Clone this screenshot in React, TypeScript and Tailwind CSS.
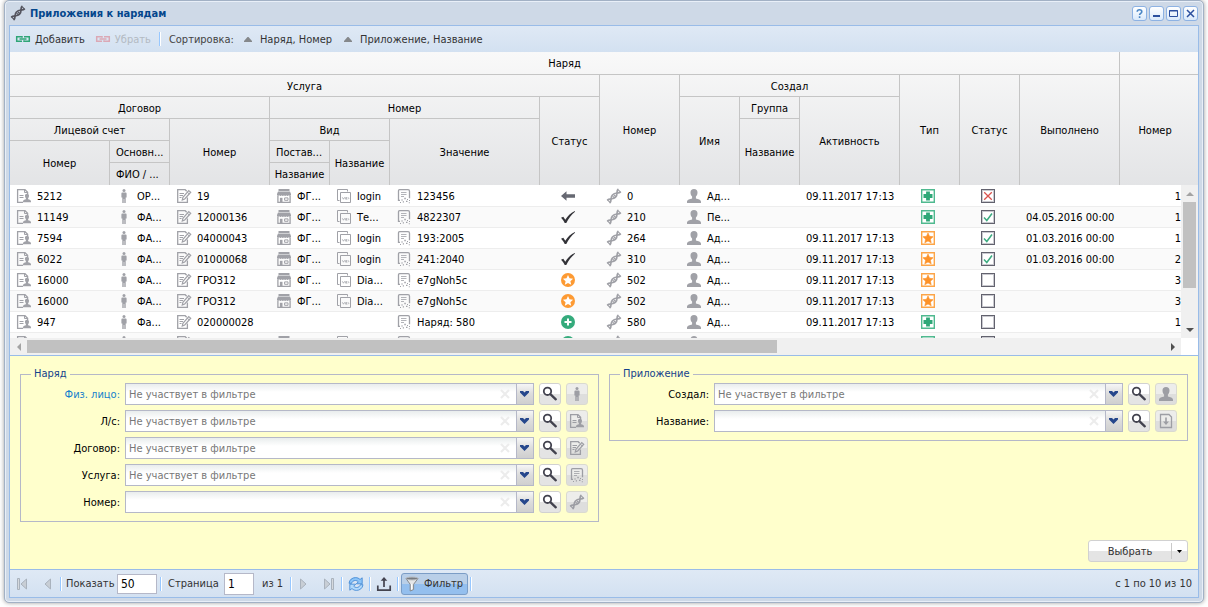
import { useState } from 'react'
import type { ReactNode } from 'react'
import clsx from 'clsx'

type IconProps = { className?: string }

function Icon({ children, className }: { children: ReactNode; className?: string }) {
  return (
    <svg viewBox="0 0 16 16" aria-hidden="true" className={clsx('inline-block size-4 shrink-0', className)}>
      {children}
    </svg>
  )
}

const DnaIcon = ({ className }: IconProps) => (
  <Icon className={className}>
    <g fill="none" stroke="currentColor" strokeWidth="1.7" strokeLinecap="round">
      <path d="M1.600 11.800c1.300-1 2.300-.5 3.400-.8C5 7.800 7 5.500 11 5c.3-1.300-.2-2.300.8-3.500" />
      <path d="M4.200 14.500c1-1.200.5-2.200.8-3.500C9 10.500 11 8.200 11 5c1.100-.3 2.100.2 3.400-.8" />
      <path d="M6.900 8.400l1.400 1.200M8 7l1.400 1.200M12.500 2.200l1.500 1.500M2 12.300l1.700 1.700" strokeWidth="1.200" />
    </g>
  </Icon>
)

const AccountIcon = ({ className }: IconProps) => (
  <Icon className={className}>
    <path d="M7 14.300H1.600V1.700h7.400l2.600 2.600V6" fill="none" stroke="currentColor" strokeWidth="1.300" />
    <path d="M8.500 1.700v2.800h2.800" fill="none" stroke="currentColor" />
    <path d="M3.500 7.500h4M3.500 9.500h4" stroke="currentColor" />
    <path d="M11 5.800c1.300 0 2 .8 2 2.100 0 1-.4 1.800-.9 2.300v1.100c1.400.4 2.900.8 2.900 2.100v.8H7v-.8c0-1.300 1.500-1.700 2.900-2.100v-1.100c-.5-.5-.9-1.300-.9-2.300 0-1.300.7-2.100 2-2.100z" fill="currentColor" />
  </Icon>
)

const PersonIcon = ({ className }: IconProps) => (
  <Icon className={className}>
    <circle cx="8" cy="2.500" r="1.500" fill="currentColor" />
    <path d="M6.500 4.500h3c.7 0 1.100.4 1.100 1.100v4h-.9V15H8.300v-4h-.6v4H6.300V9.600h-.9v-4c0-.7.4-1.100 1.100-1.100z" fill="currentColor" />
  </Icon>
)

const ContractIcon = ({ className }: IconProps) => (
  <Icon className={className}>
    <path d="M11.400 9.500v4.800H1.700V1.700h7.500l1.500 1.500" fill="none" stroke="currentColor" strokeWidth="1.300" />
    <path d="M3.500 5.500h4.500M3.500 7.500h3.500M3.500 9.500h2" stroke="currentColor" />
    <path d="M12.800 2.600l1.900 1.600-6 6.800-2.400 1 .6-2.600z" fill="none" stroke="currentColor" strokeWidth="1.200" />
    <path d="M11.300 4.200l2 1.800" stroke="currentColor" />
  </Icon>
)

const ShopIcon = ({ className }: IconProps) => (
  <Icon className={className}>
    <path d="M2.500 1h11v2h-11zM2 3.600h12L15 6v1c0 1-1.800 1.200-2.400.2-.6 1-1.700 1-2.300 0-.6 1-1.700 1-2.300 0-.6 1-1.700 1-2.300 0-.6 1-1.700 1-2.300 0C2.800 8.200 1 8 1 7V6z" fill="currentColor" />
    <path d="M1.900 8v6.400h12.200V8" fill="none" stroke="currentColor" strokeWidth="1.300" />
    <path d="M3.900 9.800h2.600V14H3.900z" fill="currentColor" />
    <path d="M8.600 9.900h3.400v2.400H8.600z" fill="none" stroke="currentColor" />
  </Icon>
)

const WindowsIcon = ({ className }: IconProps) => (
  <Icon className={className}>
    <path d="M3.500 12.500h-2v-11h10v2" fill="none" stroke="currentColor" />
    <path d="M4.500 4.500h10v10h-10z" fill="none" stroke="currentColor" />
    <path d="M6.300 9.300l1.200 1.900 1.100-1.900M9.700 11.200V9.500h1v1.700zM12 9.300l.8 1-.8 1" fill="none" stroke="currentColor" strokeWidth=".8" />
  </Icon>
)

const ServiceIcon = ({ className }: IconProps) => (
  <Icon className={className}>
    <path d="M4 12.300H2.500V2.700c0-.6.400-1 1-1H12c1 0 1.500.6 1.500 1.500v7" fill="none" stroke="currentColor" strokeWidth="1.300" />
    <path d="M5 4.500h5.500M5 6.500h5.500M5 8.500h3" fill="none" stroke="currentColor" strokeWidth=".8" />
    <path d="M8.300 9.800h1.500v1.500H8.300zM5.300 11.500h1.500v1H5.300zM11 11h1v1h-1zM6.800 13.300H8v1.200H6.800zM10 12.700h1.500v1.200H10zM13 12h1v1h-1zM4 14h1v1H4zM12.800 14.300h1v1h-1z" fill="currentColor" />
  </Icon>
)

const UserIcon = ({ className }: IconProps) => (
  <Icon className={className}>
    <path d="M8 1c2.300 0 3.500 1.400 3.500 3.500 0 1.800-.7 3.200-1.600 4.100v1.800c2.300.5 5.100 1.200 5.100 3.300V15H1v-1.300c0-2.100 2.800-2.800 5.100-3.300V8.600c-.9-.9-1.600-2.300-1.600-4.100C4.500 2.400 5.700 1 8 1z" fill="currentColor" />
  </Icon>
)

const DownloadIcon = ({ className }: IconProps) => (
  <Icon className={className}>
    <path d="M2.500 1.500H11L13.500 4v10.500h-11z" fill="none" stroke="currentColor" strokeWidth="1.300" />
    <path d="M7.200 4.500h1.600v4h2.200l-3 3.500-3-3.500h2.200z" fill="currentColor" />
  </Icon>
)

const LinkIcon = ({ className }: IconProps) => (
  <Icon className={className}>
    <path d="M7 10.300H1.700V5.700H7v1.100M9 5.700h5.300v4.600H9V9.200M4.500 8h7" fill="none" stroke="currentColor" strokeWidth="1.500" />
  </Icon>
)

const SearchIcon = ({ className }: IconProps) => (
  <Icon className={className}>
    <circle cx="5.500" cy="5.300" r="3.700" fill="none" stroke="currentColor" strokeWidth="1.800" />
    <path d="M8.600 8.300l5.200 5" stroke="currentColor" strokeWidth="2.300" strokeLinecap="round" />
  </Icon>
)

const RefreshIcon = () => (
  <Icon>
    <path d="M1 7.300C1.400 3.700 4.300 1.600 7.500 1.600c2 0 3.400.7 4.500 1.900l2.200-1.700v6H8.300l2-2C9.600 5 8.700 4.500 7.500 4.500 5.600 4.500 4 5.500 3.700 7.300z" fill="#8cc4f7" stroke="#3a83d2" strokeWidth=".8" />
    <path d="M15 8.700c-.4 3.600-3.300 5.700-6.500 5.700-2 0-3.400-.7-4.500-1.900l-2.200 1.700v-6h5.900l-2 2c.7.800 1.600 1.300 2.800 1.300 1.900 0 3.500-1 3.800-2.800z" fill="#b2dafc" stroke="#3a83d2" strokeWidth=".8" />
  </Icon>
)

const ExportIcon = () => (
  <Icon className="text-[#43434f]">
    <path d="M1.800 9.500v4.600h12.400V9.500M8 11V3.500" fill="none" stroke="currentColor" strokeWidth="1.700" />
    <path d="M8 1l3.300 3.800H4.700z" fill="currentColor" />
  </Icon>
)

const FunnelIcon = () => (
  <Icon>
    <path d="M2 2.500L6.200 8.300V15l3.400-1.500V8.300L14 2.500z" fill="#e4e6e8" stroke="#85898d" />
    <ellipse cx="8" cy="2.500" rx="6" ry="1.400" fill="#777b80" stroke="#b4b8bc" />
    <path d="M7.600 8v5.500" stroke="#fff" />
  </Icon>
)

function PageArrow({ label, flip, bar }: { label: string; flip?: boolean; bar?: boolean }) {
  return (
    <button disabled aria-label={label} className="flex h-[22px] w-6 items-center justify-center rounded-sm text-[#a9b2bd]">
      <Icon className={clsx(flip && '-scale-x-100')}>
        {bar && <path d="M2.500 2.500h2v11h-2z" fill="#d5d9de" stroke="currentColor" />}
        <path d="M11.500 3v10L6 8z" fill="#c8ced5" stroke="currentColor" />
      </Icon>
    </button>
  )
}

const star = 'M8 3l1.500 3.300 3.600.4-2.700 2.500.8 3.600L8 11l-3.200 1.800.8-3.600-2.700-2.500 3.600-.4z'

function StatusIcon({ kind }: { kind: string }) {
  if (kind === 'back')
    return (
      <Icon>
        <path d="M1 8l5.500-4.700v3H15v3.400H6.500v3z" fill="#666872" />
      </Icon>
    )
  if (kind === 'done')
    return (
      <Icon>
        <path d="M1 8.800l2.300-1 2 3C7.500 7.200 10.500 3.800 14.800 2l.2.800C11.500 5.500 8.500 9.400 6.300 14H4.700C3.800 12 2.700 10.300 1 8.800z" fill="#333338" />
      </Icon>
    )
  if (kind === 'star')
    return (
      <Icon>
        <circle cx="8" cy="8" r="7" fill="#fd9a33" />
        <path d={star} fill="#fff" />
      </Icon>
    )
  return (
    <Icon>
      <circle cx="8" cy="8" r="7" fill="#35ab7c" />
      <path d="M8 4.500v7M4.500 8h7" stroke="#fff" strokeWidth="2" />
    </Icon>
  )
}

function TypeIcon({ kind }: { kind: string }) {
  if (kind === 'star')
    return (
      <Icon>
        <path d="M1.700 1.700h12.600v12.600H1.700z" fill="#fff" stroke="#fca548" strokeWidth="1.400" />
        <path d={star} fill="#fd9228" stroke="#fd9228" strokeWidth=".6" />
      </Icon>
    )
  return (
    <Icon>
      <path d="M1.700 1.700h12.600v12.600H1.700z" fill="#fff" stroke="#4fb98f" strokeWidth="1.400" />
      <path d="M8 3.500v9M3.500 8h9" stroke="#2fa878" strokeWidth="3.800" />
    </Icon>
  )
}

function Tick({ state }: { state: string }) {
  return (
    <span className="inline-grid size-4 align-middle">
      <input
        type="checkbox"
        readOnly
        checked={state === 'yes'}
        aria-label="Статус"
        className="col-start-1 row-start-1 m-px appearance-none border border-[#62626e] bg-white inset-ring inset-ring-[#c9c9cf]"
      />
      <svg viewBox="0 0 16 16" aria-hidden="true" className="pointer-events-none col-start-1 row-start-1" fill="none">
        {state === 'yes' && <path d="M4 8.500L6.800 11.500 12 4.500" stroke="#3cab80" strokeWidth="1.500" />}
        {state === 'no' && <path d="M4.200 4.200l7.600 7.600M11.800 4.200l-7.600 7.600" stroke="#d9534f" strokeWidth="1.300" />}
      </svg>
    </span>
  )
}

const date = '09.11.2017 17:13'

// account, person, contract, provider, service kind, value, status, order, author, created, type, check, finished, last
// null leaves the cell empty, '' keeps the icon alone
const rows = [
  ['5212', 'ОР...', '19', 'ФГ...', 'login', '123456', 'back', '0', 'Ад...', date, 'plus', 'no', '', '1'],
  ['11149', 'ФА...', '12000136', 'ФГ...', 'Те...', '4822307', 'done', '210', 'Пе...', '', 'plus', 'yes', '04.05.2016 00:00', '1'],
  ['7594', 'ФА...', '04000043', 'ФГ...', 'login', '193:2005', 'done', '264', 'Ад...', date, 'star', 'yes', '01.03.2016 00:00', '1'],
  ['6022', 'ФА...', '01000068', 'ФГ...', 'login', '241:2040', 'done', '310', 'Ад...', date, 'star', 'yes', '01.03.2016 00:00', '2'],
  ['16000', 'ФА...', 'ГРО312', 'ФГ...', 'Dia...', 'e7gNoh5c', 'star', '502', 'Ад...', date, 'star', '', '', '3'],
  ['16000', 'ФА...', 'ГРО312', 'ФГ...', 'Dia...', 'e7gNoh5c', 'star', '502', 'Ад...', date, 'star', '', '', '3'],
  ['947', 'Фа...', '020000028', null, null, 'Наряд: 580', 'plus', '580', 'Ад...', date, 'plus', '', '', '1'],
  ['', '', '', '', '', '', 'plus', '', '', '', 'plus', '', '', ''],
]

function Columns() {
  return (
    <colgroup>
      <col className="w-[100px]" />
      <col className="w-[60px]" />
      <col className="w-[100px]" />
      <col className="w-[60px]" />
      <col className="w-[60px]" />
      <col className="w-[150px]" />
      <col className="w-[60px]" />
      <col className="w-20" />
      <col className="w-[60px]" />
      <col className="w-[60px]" />
      <col className="w-[100px]" />
      <col className="w-[60px]" />
      <col className="w-[60px]" />
      <col className="w-[100px]" />
      <col />
    </colgroup>
  )
}

type HeadProps = { children?: ReactNode; cols?: number; span?: number; left?: boolean; last?: boolean; bottom?: boolean }

function Head({ children, cols, span, left, last, bottom }: HeadProps) {
  return (
    <th
      colSpan={cols}
      rowSpan={span}
      className={clsx(
        'overflow-hidden border-[#c5c5c5] pt-px pb-0 font-normal whitespace-nowrap',
        left ? 'pl-1.5 text-left' : 'px-0 text-center',
        last ? 'pr-2' : 'border-r',
        !bottom && 'border-b',
      )}
    >
      {children}
    </th>
  )
}

function GridHeader() {
  return (
    <div className="bg-linear-to-b from-[#f9f9f9] to-[#e3e4e6]">
      <table className="w-full table-fixed border-separate border-spacing-0">
        <Columns />
        <thead>
          <tr className="h-[23px]">
            <Head cols={14}>Наряд</Head>
            <Head last />
          </tr>
          <tr className="h-[22px]">
            <Head cols={7}>Услуга</Head>
            <Head span={5} bottom>Номер</Head>
            <Head cols={3}>Создал</Head>
            <Head span={5} bottom>Тип</Head>
            <Head span={5} bottom>Статус</Head>
            <Head span={5} bottom>Выполнено</Head>
            <Head span={5} bottom last>Номер</Head>
          </tr>
          <tr className="h-[22px]">
            <Head cols={3}>Договор</Head>
            <Head cols={3}>Номер</Head>
            <Head span={4} bottom>Статус</Head>
            <Head span={4} bottom>Имя</Head>
            <Head>Группа</Head>
            <Head span={4} bottom>Активность</Head>
          </tr>
          <tr className="h-[22px]">
            <Head cols={2}>Лицевой счет</Head>
            <Head span={3} bottom>Номер</Head>
            <Head cols={2}>Вид</Head>
            <Head span={3} bottom>Значение</Head>
            <Head span={3} bottom>Название</Head>
          </tr>
          <tr className="h-[22px]">
            <Head span={2} bottom>Номер</Head>
            <Head left>Основн...</Head>
            <Head left>Постав...</Head>
            <Head span={2} bottom>Название</Head>
          </tr>
          <tr className="h-[22px]">
            <Head left bottom>ФИО / ...</Head>
            <Head bottom>Название</Head>
          </tr>
        </thead>
      </table>
    </div>
  )
}

function Cell({ icon, children }: { icon?: ReactNode; children?: string | null }) {
  return (
    <td className="overflow-hidden border-b border-[#ededed] pl-1.5 whitespace-nowrap">
      {children != null && (
        <span className="flex items-center gap-[5px]">
          {icon}
          {children && <span>{children}</span>}
        </span>
      )}
    </td>
  )
}

function MarkCell({ children }: { children: ReactNode }) {
  return (
    <td className="border-b border-[#ededed] pr-1">
      <span className="flex justify-center">{children}</span>
    </td>
  )
}

function GridBody() {
  const gray = 'text-[#a0a1a7]'
  return (
    <div className="flex h-[153px]">
      <div className="min-w-0 flex-1 overflow-hidden bg-white pt-px">
        <table className="w-full table-fixed border-separate border-spacing-0 text-black">
          <Columns />
          <tbody>
            {rows.map((r, i) => (
              <tr key={i} className="h-[21px] even:bg-[#fafafa]">
                <Cell icon={<AccountIcon className={gray} />}>{r[0]}</Cell>
                <Cell icon={<PersonIcon className={gray} />}>{r[1]}</Cell>
                <Cell icon={<ContractIcon className={gray} />}>{r[2]}</Cell>
                <Cell icon={<ShopIcon className={gray} />}>{r[3]}</Cell>
                <Cell icon={<WindowsIcon className={gray} />}>{r[4]}</Cell>
                <Cell icon={<ServiceIcon className={gray} />}>{r[5]}</Cell>
                <MarkCell><StatusIcon kind={r[6] ?? ''} /></MarkCell>
                <Cell icon={<DnaIcon className={gray} />}>{r[7]}</Cell>
                <Cell icon={<UserIcon className={gray} />}>{r[8]}</Cell>
                <Cell />
                <Cell>{r[9]}</Cell>
                <MarkCell><TypeIcon kind={r[10] ?? ''} /></MarkCell>
                <MarkCell><Tick state={r[11] ?? ''} /></MarkCell>
                <Cell>{r[12]}</Cell>
                <td className="border-b border-[#ededed] text-right">{r[13]}</td>
              </tr>
            ))}
          </tbody>
        </table>
      </div>
      <div className="flex w-[17px] flex-col items-center bg-[#f0f0f0]">
        <button aria-label="Вверх" className="flex h-[17px] w-full items-center justify-center text-[#a3a3a3]">
          <svg viewBox="0 0 8 4" className="h-1 w-2"><path d="M0 4l4-4 4 4z" fill="currentColor" /></svg>
        </button>
        <div className="h-[86px] w-[13px] bg-[#c1c1c1]" />
        <button aria-label="Вниз" className="mt-auto flex h-[17px] w-full items-center justify-center text-[#505050]">
          <svg viewBox="0 0 8 4" className="h-1 w-2"><path d="M0 0l4 4 4-4z" fill="currentColor" /></svg>
        </button>
      </div>
    </div>
  )
}

function HorizontalScroll() {
  return (
    <div className="flex h-[17px] bg-white">
      <div className="flex flex-1 items-center bg-[#f0f0f0]">
        <button aria-label="Влево" className="flex h-full w-[17px] items-center justify-center text-[#a3a3a3]">
          <svg viewBox="0 0 4 8" className="h-2 w-1"><path d="M4 0L0 4l4 4z" fill="currentColor" /></svg>
        </button>
        <div className="flex-1">
          <div className="h-[13px] w-[66%] bg-[#c1c1c1]" />
        </div>
        <button aria-label="Вправо" className="flex h-full w-[17px] items-center justify-center text-[#505050]">
          <svg viewBox="0 0 4 8" className="h-2 w-1"><path d="M0 0l4 4-4 4z" fill="currentColor" /></svg>
        </button>
      </div>
      <div className="w-[17px]" />
    </div>
  )
}

type FieldProps = { id: string; label: string; icon: ReactNode; hint?: string; active?: boolean }

function FilterField({ id, label, icon, hint, active }: FieldProps) {
  const [value, setValue] = useState('')
  return (
    <div className="flex h-[22px] items-center">
      <label htmlFor={id} className={clsx('w-[94px] pr-[5px] text-right', active ? 'text-[#157fcc]' : 'text-black')}>
        {label}:
      </label>
      <div className="mr-[5px] flex h-full min-w-0 flex-1 border border-[#b5b8c8] bg-white bg-linear-to-b from-[#e9eded] to-white to-40%">
        <input
          id={id}
          value={value}
          placeholder={hint}
          onChange={(e) => setValue(e.target.value)}
          className="min-w-0 flex-1 px-[3px] pt-px text-black outline-none placeholder:text-[#777]"
        />
        <button aria-label="Очистить" onClick={() => setValue('')} className="flex w-[22px] items-center justify-center text-[#ececec]">
          <svg viewBox="0 0 10 10" className="size-2.5"><path d="M1 1l8 8M9 1L1 9" stroke="currentColor" strokeWidth="2.200" /></svg>
        </button>
        <button aria-label="Открыть список" className="flex w-[17px] border-l border-[#b5b8c8] bg-linear-to-b from-[#f6f6f6] via-[#dcdcdc] to-[#cfcfcf] pt-[7px] pl-[3px]">
          <svg viewBox="0 0 9 6" className="h-1.5 w-[9px]"><path d="M0 0h3l1.500 1.500L6 0h3v1.500L4.500 6 0 1.500z" fill="#26478c" /></svg>
        </button>
      </div>
      <button
        aria-label="Найти"
        className="mr-[5px] flex size-[22px] items-center justify-center rounded-[3px] border border-[#d1d1d1] bg-linear-to-b from-white from-50% to-[#e4e4e4] to-50% text-[#43434f]"
      >
        <SearchIcon />
      </button>
      <button
        disabled
        aria-label="Карточка"
        className="flex size-[22px] items-center justify-center rounded-[3px] border border-[#dadad0] bg-linear-to-b from-[#ededeb] from-50% to-[#dededd] to-50% text-[#9d9ea4]"
      >
        {icon}
      </button>
    </div>
  )
}

function FilterGroup({ title, children }: { title: string; children: ReactNode }) {
  return (
    <fieldset className="flex-1 border border-[#b5b8c8] px-2.5 pb-2">
      <legend className="px-[3px] leading-[14px] text-[#15428b]">{title}</legend>
      <div className="flex flex-col gap-[5px] pt-0.5">{children}</div>
    </fieldset>
  )
}

const hint = 'Не участвует в фильтре'

function FilterPanel() {
  return (
    <form className="flex flex-1 flex-col border-t border-[#99bce8] bg-[#ffffcc] px-2.5 pt-[11px] pb-[7px]" onSubmit={(e) => e.preventDefault()}>
      <div className="flex items-start gap-2.5">
        <FilterGroup title="Наряд">
          <FilterField id="person" label="Физ. лицо" hint={hint} icon={<PersonIcon />} active />
          <FilterField id="account" label="Л/с" hint={hint} icon={<AccountIcon />} />
          <FilterField id="contract" label="Договор" hint={hint} icon={<ContractIcon />} />
          <FilterField id="service" label="Услуга" hint={hint} icon={<ServiceIcon />} />
          <FilterField id="order" label="Номер" icon={<DnaIcon />} />
        </FilterGroup>
        <FilterGroup title="Приложение">
          <FilterField id="author" label="Создал" hint={hint} icon={<UserIcon />} />
          <FilterField id="name" label="Название" icon={<DownloadIcon />} />
        </FilterGroup>
      </div>
      <div className="mt-auto flex justify-end">
        <div className="flex h-[22px] w-[100px] items-center rounded-[3px] border border-[#d1d1d1] bg-linear-to-b from-white from-50% to-[#e4e4e4] to-50% text-[#333]">
          <button className="h-full flex-1">Выбрать</button>
          <button aria-label="Ещё" className="flex h-4 w-4 items-center justify-center border-l border-[#c9c9c9]">
            <svg viewBox="0 0 5 3" className="h-[3px] w-[5px]"><path d="M0 0h5L2.500 3z" fill="#000" /></svg>
          </button>
        </div>
      </div>
    </form>
  )
}

const Separator = ({ className }: IconProps) => <span className={clsx('h-3.5 w-0.5 border-r border-l border-r-white border-l-[#98c8ff]', className)} />

function PagingBar() {
  return (
    <footer className="flex h-7 items-center border-t border-[#99bce8] bg-linear-to-b from-[#dfe9f5] to-[#d3e1f1] pr-1.5 pl-px text-[#333]">
      <PageArrow label="Первая страница" bar />
      <PageArrow label="Предыдущая страница" />
      <Separator className="ml-px" />
      <label htmlFor="limit" className="w-[55px] pl-1">Показать</label>
      <input id="limit" defaultValue="50" className="h-5 w-10 border border-[#b5b8c8] bg-white px-[3px] text-xs text-black" />
      <Separator className="ml-[3px]" />
      <label htmlFor="page" className="w-[62px] pl-1.5">Страница</label>
      <input id="page" defaultValue="1" className="h-[22px] w-[30px] border border-[#b5b8c8] bg-white px-[3px] text-xs text-black" />
      <span className="w-9 pl-2">из 1</span>
      <Separator />
      <PageArrow label="Следующая страница" flip />
      <PageArrow label="Последняя страница" flip bar />
      <Separator className="ml-px" />
      <button aria-label="Обновить" className="flex w-[26px] justify-center"><RefreshIcon /></button>
      <Separator />
      <button aria-label="Выгрузить" className="flex w-[26px] justify-center"><ExportIcon /></button>
      <Separator />
      <button className="ml-0.5 flex h-[22px] items-center gap-1 rounded-[3px] border border-[#7b9dc6] bg-linear-to-b from-[#b9cfe8] from-50% to-[#94bfee] to-50% pr-1 pl-0.5">
        <FunnelIcon />
        <span>Фильтр</span>
      </button>
      <Separator className="ml-0.5" />
      <span className="ml-auto">с 1 по 10 из 10</span>
    </footer>
  )
}

function WindowTool({ label, children }: { label: string; children: ReactNode }) {
  return (
    <button aria-label={label} className="flex size-[15px] items-center justify-center rounded-[3px] border border-[#8db2e3] bg-linear-to-b from-white to-[#d9e9fb]">
      <svg viewBox="0 0 11 11" aria-hidden="true" className="size-[11px]" fill="none" stroke="#2b4f9e">{children}</svg>
    </button>
  )
}

function TitleBar() {
  return (
    <header className="flex h-6 items-center pr-px pl-px">
      <DnaIcon className="text-[#55555f]" />
      <h1 className="ml-1 flex-1 font-bold text-[#04468c]">Приложения к нарядам</h1>
      <div className="flex gap-0.5">
        <WindowTool label="Справка">
          <path d="M3.200 3.800C3.200 2.500 4.200 1.700 5.500 1.700s2.300.8 2.300 2c0 1.600-2.200 1.600-2.200 3.200M5.600 8.300v1.700" stroke="#4a86c5" strokeWidth="1.600" />
        </WindowTool>
        <WindowTool label="Свернуть"><path d="M2 8h7" strokeWidth="2" /></WindowTool>
        <WindowTool label="Развернуть"><path d="M1.500 2.500h8v6h-8zM1 3h9" /></WindowTool>
        <WindowTool label="Закрыть"><path d="M2 2l7 7M9 2L2 9" strokeWidth="1.500" /></WindowTool>
      </div>
    </header>
  )
}

const SortArrow = () => (
  <svg viewBox="0 0 8 5" aria-hidden="true" className="h-[5px] w-2"><path d="M0 5V4l3.500-4h1L8 4v1z" fill="#85888b" /></svg>
)

function Toolbar() {
  return (
    <div className="flex h-[26px] items-center bg-linear-to-b from-[#dfe9f5] to-[#d3e1f1] pl-[5px] text-[#333]">
      <button className="flex items-center gap-1">
        <LinkIcon className="text-[#2fa577]" />
        Добавить
      </button>
      <button disabled className="ml-2.5 flex items-center gap-1 text-[#b3bac2]">
        <LinkIcon className="text-[#dba8b5]" />
        Убрать
      </button>
      <Separator className="ml-2" />
      <span className="ml-2 text-[#444]">Сортировка:</span>
      <button className="ml-2.5 flex items-center gap-2"><SortArrow />Наряд, Номер</button>
      <button className="ml-3 flex items-center gap-2"><SortArrow />Приложение, Название</button>
    </div>
  )
}

function App() {
  return (
    <div className="flex min-h-screen flex-col bg-white px-1 pb-1 font-['DejaVu_Sans_Condensed','Liberation_Sans',sans-serif] text-[11px] leading-[15px] text-black">
      <div className="flex flex-1 flex-col rounded-[5px] border border-[#a2b1c5] bg-[#ced9e7] px-1 pb-1 shadow-[0_0_4px_rgba(90,90,90,0.6)] inset-ring inset-ring-[#e8eff8]">
        <TitleBar />
        <main className="flex flex-1 flex-col border border-[#99bce8]">
          <Toolbar />
          <GridHeader />
          <GridBody />
          <HorizontalScroll />
          <FilterPanel />
          <PagingBar />
        </main>
      </div>
    </div>
  )
}

export default App
